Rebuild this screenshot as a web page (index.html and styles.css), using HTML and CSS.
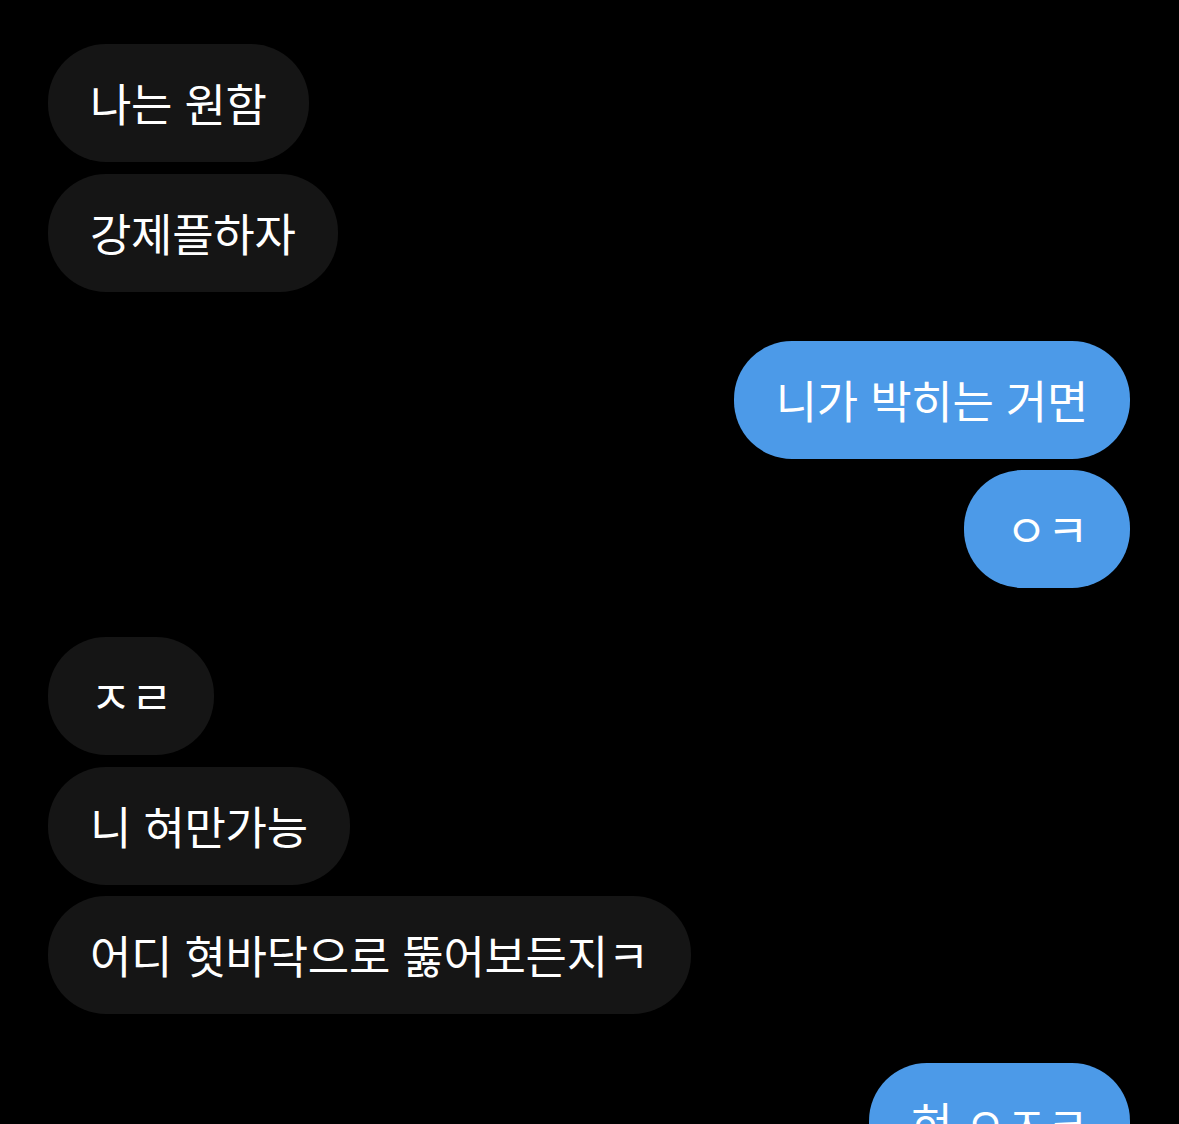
FILE: index.html
```html
<!DOCTYPE html>
<html lang="ko">
<head>
<meta charset="utf-8">
<link rel="stylesheet" href="styles.css">
</head>
<body>
<div class="chat">
  <div class="group">
    <div class="bubble in">나는 원함</div>
    <div class="bubble in">강제플하자</div>
  </div>
  <div class="group">
    <div class="bubble out">니가 박히는 거면</div>
    <div class="bubble out">ㅇㅋ</div>
  </div>
  <div class="group">
    <div class="bubble in">ㅈㄹ</div>
    <div class="bubble in">니 혀만가능</div>
    <div class="bubble in">어디 혓바닥으로 뚫어보든지ㅋ</div>
  </div>
  <div class="group">
    <div class="bubble out">혀 ㅇㅈㅋ</div>
  </div>
</div>
</body>
</html>
```
FILE: styles.css
```css
html, body {
  margin: 0;
  padding: 0;
  background: #000;
  height: 1124px;
  overflow: hidden;
}
.chat {
  display: flex;
  flex-direction: column;
  gap: 49px;
  padding: 44px 49px 0 48px;
  font-family: "Noto Sans CJK KR", "Noto Sans", sans-serif;
}
.group {
  display: flex;
  flex-direction: column;
  gap: 11.5px;
}
.bubble {
  height: 118px;
  line-height: 118px;
  padding: 0 42px;
  border-radius: 58px;
  font-size: 45px;
  letter-spacing: -0.3px;
  color: #fff;
  white-space: nowrap;
  box-sizing: border-box;
}
.in {
  align-self: flex-start;
  background: #151515;
}
.out {
  align-self: flex-end;
  background: #4c9ae8;
}
```
